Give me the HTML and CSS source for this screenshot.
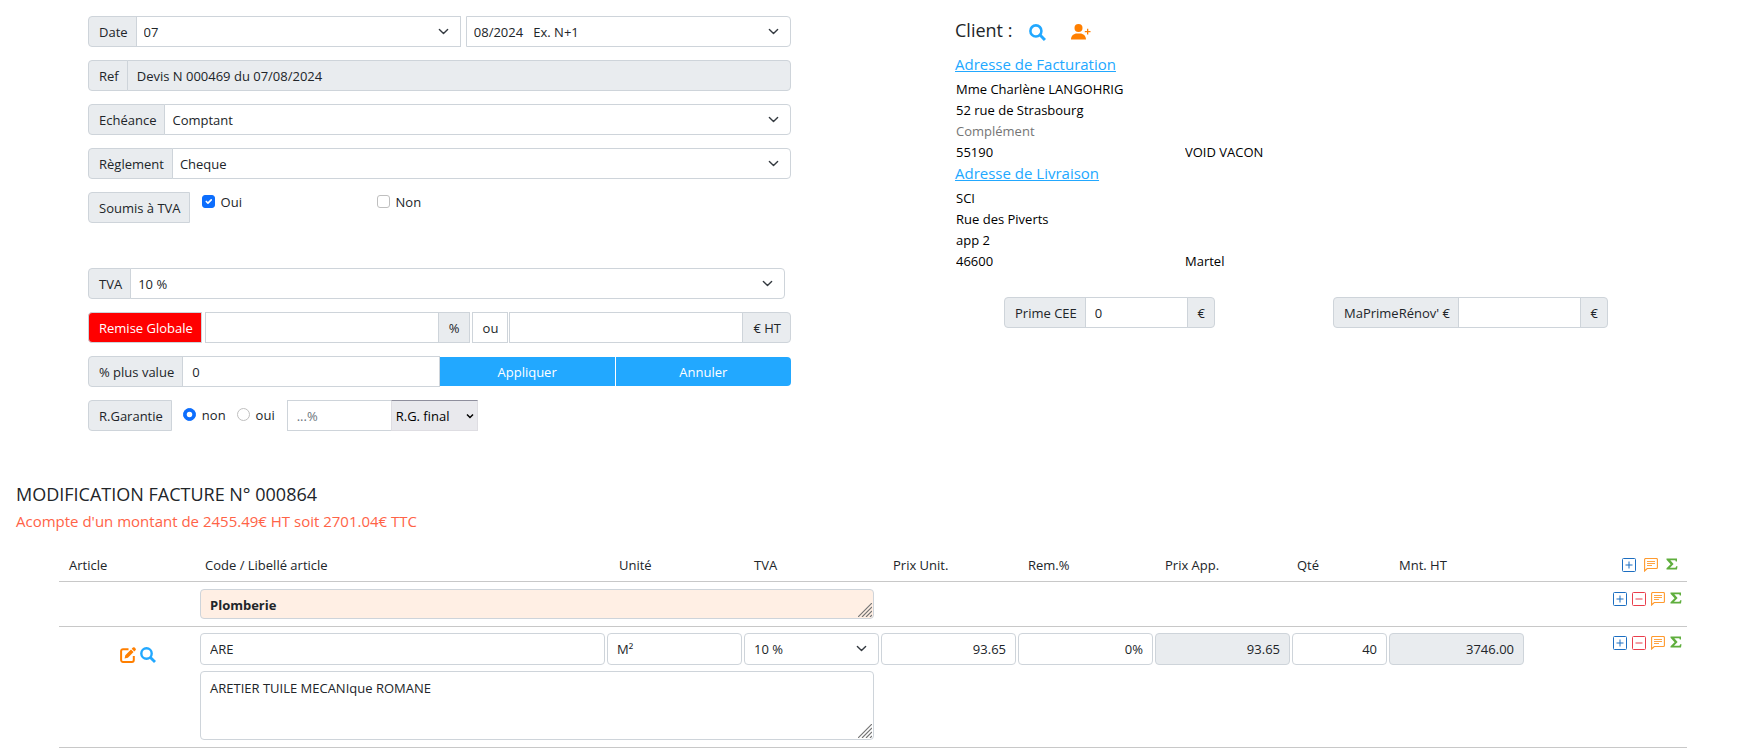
FILE: index.html
```html
<!DOCTYPE html>
<html lang="fr">
<head>
<meta charset="utf-8">
<title>Modification facture</title>
<link rel="stylesheet" href="styles.css">
</head>
<body>
<svg class="sprite" aria-hidden="true">
  <symbol id="i-search" viewBox="0 0 16 16"><circle cx="6.5" cy="6.5" r="5.2" fill="none" stroke="currentColor" stroke-width="2.4"/><path d="M10.4 10.4 15 15" fill="none" stroke="currentColor" stroke-width="2.8"/></symbol>
  <symbol id="i-user" viewBox="0 0 20 16"><circle cx="7.500" cy="4" r="4" fill="currentColor"/><path d="M0 15.500C0 11.800 2.800 9.500 6 9.500h3c3.200 0 6 2.300 6 6ZM13.800 6.900h2.200V4.700h1.300v2.200h2.200v1.300h-2.200v2.200H16V8.200h-2.200Z" fill="currentColor"/></symbol>
  <symbol id="i-edit" viewBox="0 0 16 16"><path d="M8.500 2.200H3A1.900 1.900 0 0 0 1.100 4.100V13A1.900 1.900 0 0 0 3 14.900h8.900A1.900 1.900 0 0 0 13.800 13V9" fill="none" stroke="currentColor" stroke-width="2"/><path d="M4.600 11.500 5.300 8.200 11 2.500 13.600 5.100 7.900 10.800ZM11.700 1.800 12.900.6a1.300 1.300 0 0 1 1.800 0l.8.8a1.300 1.300 0 0 1 0 1.800L14.300 4.400Z" fill="currentColor"/></symbol>
  <symbol id="i-plus" viewBox="0 0 14 14"><rect x=".5" y=".5" width="13" height="13" rx="1" fill="none" stroke="currentColor"/><path d="M3.500 7h7M7 3.500v7" stroke="currentColor"/></symbol>
  <symbol id="i-minus" viewBox="0 0 14 14"><rect x=".5" y=".5" width="13" height="13" rx="1" fill="none" stroke="currentColor"/><path d="M3.500 7h7" stroke="currentColor"/></symbol>
  <symbol id="i-note" viewBox="0 0 14 14"><path d="M.6 13V1.500a1 1 0 0 1 1-1h10.800a1 1 0 0 1 1 1v8a1 1 0 0 1-1 1H3.200Z" fill="none" stroke="currentColor" stroke-width="1.100"/><path d="M3 3.500h8M3 5.500h8M3 7.500h5" stroke="currentColor" stroke-width=".9"/></symbol>
  <symbol id="i-sum" viewBox="0 0 12 12"><path d="M.5.500H11V3.500H9.800L9.300 2.200H4.300L7.600 5.900 4 9.700H9.500L10.200 8.200H11.500L11 11.500H.5V10.300L4.600 6.200.5 1.700Z" fill="currentColor"/></symbol>
</svg>

<main class="page">
  <div class="top">
    <form class="settings">
      <div class="group">
        <label class="addon first" for="day">Date</label>
        <select class="field select square" id="day"><option>07</option></select>
        <select class="field select last spaced" aria-label="Mois"><option>08/2024 &nbsp; Ex. N+1</option></select>
      </div>
      <div class="group">
        <label class="addon first" for="ref">Ref</label>
        <input class="field last" id="ref" value="Devis N 000469 du 07/08/2024" readonly>
      </div>
      <div class="group">
        <label class="addon first" for="due">Echéance</label>
        <select class="field select last" id="due"><option>Comptant</option></select>
      </div>
      <div class="group">
        <label class="addon first" for="pay">Règlement</label>
        <select class="field select last" id="pay"><option>Cheque</option></select>
      </div>
      <div class="group vat-choice">
        <span class="addon first">Soumis à TVA</span>
        <label class="choice"><input type="checkbox" class="tick" checked>Oui</label>
        <label class="choice"><input type="checkbox" class="tick">Non</label>
      </div>
      <div class="group vat-rate">
        <label class="addon first" for="vat">TVA</label>
        <select class="field select last" id="vat"><option>10 %</option></select>
      </div>
      <div class="group">
        <label class="addon first discount" for="disc">Remise Globale</label>
        <input class="field square gap-small" id="disc">
        <span class="addon">%</span>
        <label class="addon or" for="disc-ht">ou</label>
        <input class="field square" id="disc-ht">
        <span class="addon last">€ HT</span>
      </div>
      <div class="group">
        <label class="addon first" for="gain">% plus value</label>
        <input class="field square" id="gain" value="0">
        <div class="actions">
          <button type="button" class="btn">Appliquer</button>
          <button type="button" class="btn last">Annuler</button>
        </div>
      </div>
      <div class="group">
        <span class="addon first">R.Garantie</span>
        <label class="choice inline"><input type="radio" name="rg" class="tick round" checked>non</label>
        <label class="choice inline"><input type="radio" name="rg" class="tick round">oui</label>
        <input class="field square rate" placeholder="...%" aria-label="Taux de garantie">
        <select class="final" aria-label="Type de garantie"><option>R.G. final</option></select>
      </div>
    </form>

    <section class="client">
      <h2 class="title">Client :
        <button type="button" class="icon-btn blue" aria-label="Rechercher"><svg width="17" height="17"><use href="#i-search"/></svg></button>
        <button type="button" class="icon-btn orange" aria-label="Ajouter un client"><svg width="20" height="16"><use href="#i-user"/></svg></button>
      </h2>
      <a class="address-link" href="#">Adresse de Facturation</a>
      <div class="address">
        <input class="wide" value="Mme Charlène LANGOHRIG" aria-label="Nom">
        <input class="wide" value="52 rue de Strasbourg" aria-label="Rue">
        <input class="wide" placeholder="Complément" aria-label="Complément">
        <input value="55190" aria-label="Code postal">
        <input value="VOID VACON" aria-label="Ville">
      </div>
      <a class="address-link" href="#">Adresse de Livraison</a>
      <div class="address">
        <input class="wide" value="SCI" aria-label="Nom de livraison">
        <input class="wide" value="Rue des Piverts" aria-label="Rue de livraison">
        <input class="wide" value="app 2" aria-label="Complément de livraison">
        <input value="46600" aria-label="Code postal de livraison">
        <input value="Martel" aria-label="Ville de livraison">
      </div>
      <div class="grants">
        <div class="group">
          <label class="addon first" for="cee">Prime CEE</label>
          <input class="field square" id="cee" value="0">
          <span class="addon last">€</span>
        </div>
        <div class="group">
          <label class="addon first" for="renov">MaPrimeRénov' €</label>
          <input class="field square" id="renov">
          <span class="addon last">€</span>
        </div>
      </div>
    </section>
  </div>

  <h1 class="title invoice">MODIFICATION FACTURE N° 000864</h1>
  <p class="deposit">Acompte d'un montant de 2455.49€ HT soit 2701.04€ TTC</p>

  <table class="lines">
    <colgroup>
      <col class="c-article"><col class="c-code"><col class="c-std"><col class="c-std"><col class="c-std"><col class="c-std"><col class="c-std"><col class="c-qty"><col class="c-std"><col class="c-tools">
    </colgroup>
    <thead>
      <tr>
        <th class="in-m">Article</th><th class="in-s">Code / Libellé article</th><th class="in-l">Unité</th><th class="in-m">TVA</th><th class="in-l">Prix Unit.</th><th class="in-m">Rem.%</th><th class="in-m">Prix App.</th><th class="in-s">Qté</th><th class="in-m">Mnt. HT</th>
        <th>
          <div class="tools head">
            <button type="button" class="icon-btn navy" aria-label="Ajouter"><svg width="14" height="14"><use href="#i-plus"/></svg></button>
            <button type="button" class="icon-btn amber" aria-label="Commentaire"><svg width="14" height="14"><use href="#i-note"/></svg></button>
            <button type="button" class="icon-btn green" aria-label="Sous-total"><svg width="12" height="12"><use href="#i-sum"/></svg></button>
          </div>
        </th>
      </tr>
    </thead>
    <tbody>
      <tr>
        <td></td>
        <td colspan="3"><textarea class="text section" rows="1" aria-label="Section">Plomberie</textarea></td>
        <td colspan="5"></td>
        <td>
          <div class="tools">
            <button type="button" class="icon-btn navy" aria-label="Ajouter"><svg width="14" height="14"><use href="#i-plus"/></svg></button>
            <button type="button" class="icon-btn red" aria-label="Supprimer"><svg width="14" height="14"><use href="#i-minus"/></svg></button>
            <button type="button" class="icon-btn amber" aria-label="Commentaire"><svg width="14" height="14"><use href="#i-note"/></svg></button>
            <button type="button" class="icon-btn green" aria-label="Sous-total"><svg width="12" height="12"><use href="#i-sum"/></svg></button>
          </div>
        </td>
      </tr>
      <tr class="item">
        <td>
          <div class="article-tools">
            <button type="button" class="icon-btn orange" aria-label="Modifier"><svg width="16" height="16"><use href="#i-edit"/></svg></button>
            <button type="button" class="icon-btn blue" aria-label="Rechercher"><svg width="16" height="16"><use href="#i-search"/></svg></button>
          </div>
        </td>
        <td><input class="cell" value="ARE" aria-label="Code"></td>
        <td><input class="cell" value="M²" aria-label="Unité"></td>
        <td><select class="cell select" aria-label="TVA"><option>10 %</option></select></td>
        <td><input class="cell num" value="93.65" aria-label="Prix unitaire"></td>
        <td><input class="cell num" value="0%" aria-label="Remise"></td>
        <td><input class="cell num" value="93.65" readonly aria-label="Prix appliqué"></td>
        <td><input class="cell num" value="40" aria-label="Quantité"></td>
        <td><input class="cell num" value="3746.00" readonly aria-label="Montant HT"></td>
        <td>
          <div class="tools">
            <button type="button" class="icon-btn navy" aria-label="Ajouter"><svg width="14" height="14"><use href="#i-plus"/></svg></button>
            <button type="button" class="icon-btn red" aria-label="Supprimer"><svg width="14" height="14"><use href="#i-minus"/></svg></button>
            <button type="button" class="icon-btn amber" aria-label="Commentaire"><svg width="14" height="14"><use href="#i-note"/></svg></button>
            <button type="button" class="icon-btn green" aria-label="Sous-total"><svg width="12" height="12"><use href="#i-sum"/></svg></button>
          </div>
        </td>
      </tr>
      <tr class="detail">
        <td></td>
        <td colspan="3"><textarea class="text" rows="3" aria-label="Libellé">ARETIER TUILE MECANIque ROMANE</textarea></td>
        <td colspan="6"></td>
      </tr>
    </tbody>
  </table>
</main>
</body>
</html>
```
FILE: styles.css
```css
*, *::before, *::after { box-sizing: border-box; }

body {
  margin: 0;
  background: #fff;
  color: #212529;
  font: 13px/20px "Open Sans", "Noto Sans", sans-serif;
}

input, select, textarea, button { font: inherit; color: inherit; margin: 0; }

.sprite { display: none; }

.page { padding-top: 16px; }

.top {
  display: grid;
  grid-template-columns: minmax(0, 703fr) minmax(0, 789fr);
  column-gap: 164px;
  padding-left: 88px;
}

/* Invoice settings */
.settings { display: flex; flex-direction: column; gap: 13px; }
.group { display: flex; min-width: 0; }

.addon {
  height: 31px;
  padding: 5px 9px 5px 10px;
  border: 1px solid #ced4da;
  background: #e9ecef;
  white-space: nowrap;
}
.first { padding-right: 8px; border-radius: 4px 0 0 4px; }
.last { border-radius: 0 4px 4px 0; }

.field {
  flex: 1 1 0;
  min-width: 0;
  height: 31px;
  margin-left: -1px;
  padding: 4px 9px;
  border: 1px solid #ced4da;
  background-color: #fff;
}
.field[readonly], .cell[readonly] { background-color: #e9ecef; }
.square { border-radius: 0; }
.field + .addon { margin-left: -1px; }

.select {
  appearance: none;
  padding: 4px 30px 4px 7px;
  background: #fff url("data:image/svg+xml,%3Csvg xmlns='http://www.w3.org/2000/svg' viewBox='0 0 16 16'%3E%3Cpath fill='none' stroke='%23343a40' stroke-linecap='round' stroke-linejoin='round' stroke-width='2' d='m2 5 6 6 6-6'/%3E%3C/svg%3E") no-repeat right 11px center / 11px 11px;
}
.field.spaced { margin-left: 5px; }

.choice { display: flex; gap: 6px; height: 20px; white-space: nowrap; }
.vat-choice .choice { width: 175px; margin-left: 12px; }
.vat-choice .choice + .choice { margin-left: 0; }
.tick {
  appearance: none;
  width: 13px;
  height: 13px;
  margin-top: 3px;
  border: 1px solid #bfbfbf;
  border-radius: 3px;
  background: #fff center / contain no-repeat;
}
.round { border-radius: 50%; }
.tick:checked { border-color: #0d6efd; background-color: #0d6efd; }
.tick:checked:not(.round) {
  background-image: url("data:image/svg+xml,%3Csvg xmlns='http://www.w3.org/2000/svg' viewBox='0 0 20 20'%3E%3Cpath fill='none' stroke='%23fff' stroke-linecap='round' stroke-linejoin='round' stroke-width='3' d='m6 10 3 3 6-6'/%3E%3C/svg%3E");
}
.round:checked {
  background-image: url("data:image/svg+xml,%3Csvg xmlns='http://www.w3.org/2000/svg' viewBox='-4 -4 8 8'%3E%3Ccircle r='2' fill='%23fff'/%3E%3C/svg%3E");
}
.inline { margin: 5px 0 0 11px; gap: 6px; }

.vat-rate { margin: 32px 6px 0 0; }

.discount { background: #f00; color: #fff; }
.field.gap-small { margin-left: 3px; }
.field + .or, .addon.or { margin: 0 2px; background: #fff; }

.actions { display: flex; flex: 0 0 50%; gap: 1px; }
.btn {
  flex: 1 1 0;
  margin: 1px 0;
  border: 0;
  background: #22a8ff;
  color: #fff;
}

.rate { flex: 0 0 105px; margin-left: 12px; }
.rate::placeholder { color: #6c757d; }
.final {
  appearance: none;
  width: 87px;
  height: 31px;
  margin-left: -1px;
  padding: 4px;
  border: 1px solid #dedde2;
  border-top-color: #8f8f9d;
  border-radius: 0;
  background: #e9e9ed url("data:image/svg+xml,%3Csvg xmlns='http://www.w3.org/2000/svg' viewBox='0 0 8 8'%3E%3Cpath fill='none' stroke='%23000' stroke-width='1.5' d='m1 2.500 3 3 3-3'/%3E%3C/svg%3E") no-repeat right 3px center / 8px 8px;
  color: #000;
}

/* Client panel */
.title { margin: 0; font-size: 18px; font-weight: 400; line-height: 24px; }
.icon-btn { display: flex; padding: 0; border: 0; background: none; }
.client .title { display: flex; align-items: center; height: 28px; margin-bottom: 9px; }
.client .title .icon-btn { margin-top: 4px; }
.client .title .blue { margin-right: 25px; margin-left: 17px; }
.address-link { display: block; color: #22a8ff; font-size: 15px; line-height: 22px; }
.address { display: grid; grid-template-columns: 229px 1fr; margin-top: 3px; }
.address input {
  width: 100%;
  height: 21px;
  padding: 0 1px;
  border: 0;
  background: none;
  color: #000;
}
.address .wide { grid-column: 1 / -1; }
.address input::placeholder { color: #757575; }

.grants {
  display: grid;
  grid-template-columns: minmax(0, 211fr) minmax(0, 275fr);
  column-gap: 118px;
  margin: 26px 136px 0 49px;
}

.blue { color: #22a8ff; }
.orange { color: #ff7f00; }
.navy { color: #1c6ec1; }
.red { color: #e93e4c; }
.amber { color: #ff9a2e; }
.green { color: #5fae3d; }

/* Invoice lines */
.invoice { margin: 51px 16px 0; }
.deposit { margin: 3px 16px 0; color: #ff6347; font-size: 15px; line-height: 24px; }

.lines {
  width: calc(100% - 116px);
  margin: 17px 57px 0 59px;
  border-collapse: collapse;
  table-layout: fixed;
}
.c-article { width: 141px; }
.c-code { width: 25%; }
.c-std { width: 137px; }
.c-qty { width: 97px; }
.c-tools { width: 161px; }

.lines th { height: 31px; padding: 0; text-align: left; font-weight: 400; white-space: nowrap; }
.lines tr { border-bottom: 1px solid #c8c8c8; }
.lines .item { border-bottom: 0; }
.lines td { padding: 7px 2px 0 0; vertical-align: top; }
.lines .in-s { padding-left: 5px; }
.lines .in-m { padding-left: 10px; }
.lines .in-l { padding-left: 12px; }

.cell, .text {
  display: block;
  width: 100%;
  height: 32px;
  padding: 4px 9px;
  border: 1px solid #ced4da;
  border-radius: 4px;
}
.cell.select { padding-left: 9px; }
.num { text-align: right; }

.text {
  width: calc(100% - 5px);
  height: 69px;
  margin-bottom: 7px;
  padding: 6px 9px;
  resize: none;
  background: #fff url("data:image/svg+xml,%3Csvg xmlns='http://www.w3.org/2000/svg' viewBox='0 0 14 14'%3E%3Cpath fill='none' stroke='%23777' stroke-width='1.200' d='M0 14 14 0M4 14 14 4M8 14 14 8M12 14 14 12'/%3E%3C/svg%3E") no-repeat right 1px bottom 1px / 14px 14px;
}
.section { height: 30px; padding: 5px 9px; background-color: #ffefe4; font-weight: 700; }
.lines .item td { padding-top: 6px; }
.lines .detail td { padding-top: 6px; }

.tools { display: flex; justify-content: flex-end; gap: 5px; margin: 3px 3px 0 0; }
.tools.head { gap: 8px; margin: 0 9px 0 0; }
.article-tools { display: flex; gap: 4px; margin: 14px 0 0 61px; }
```
